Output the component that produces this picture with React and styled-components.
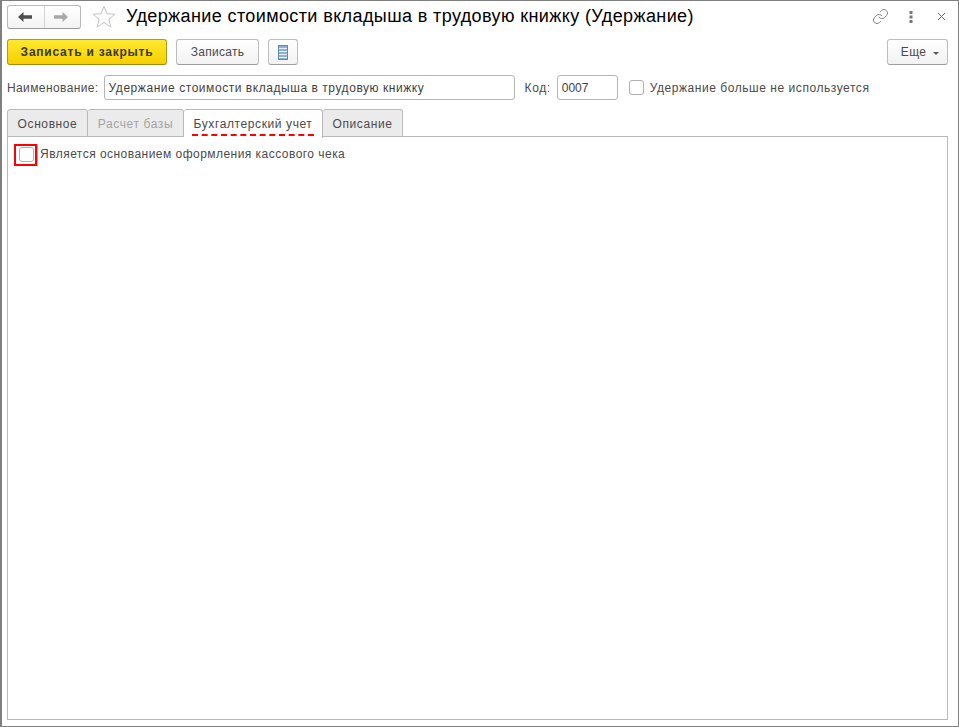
import React from "react";
import styled, { createGlobalStyle } from "styled-components";
import { Link } from "lucide-react";

const Global = createGlobalStyle`
  html, body { margin: 0; padding: 0; background: #fff; }
  body { font-family: "Liberation Sans", Arial, sans-serif; font-size: 12px; color: #4b4b4b; }
`;

const Window = styled.div`
  box-sizing: border-box;
  width: 959px;
  height: 727px;
  border: 1px solid #7f7f7f;
  border-left-width: 2px;
  padding: 4px 10px 6px 5px;
  display: flex;
  flex-direction: column;
`;

const TitleRow = styled.div`
  display: flex;
  align-items: center;
  height: 23px;
`;

const NavGroup = styled.div`
  box-sizing: border-box;
  display: flex;
  width: 74px;
  height: 24px;
  border: 1px solid #b8b8b8;
  border-bottom-color: #9a9a9a;
  border-radius: 3px;
  background: linear-gradient(#fff, #f3f3f3);
`;

const NavButton = styled.div`
  flex: 1;
  display: flex;
  align-items: center;
  justify-content: center;
  padding-right: 2px;
  & + & { border-left: 1px solid #d4d4d4; }
`;

const Star = styled.svg`
  margin-left: 11px;
  flex: none;
`;

const Title = styled.div`
  margin-left: 10px;
  font-size: 18px;
  letter-spacing: 0.39px;
  color: #000;
  white-space: nowrap;
  flex: 1;
`;

const WinIcons = styled.div`
  display: flex;
  align-items: center;
  margin-right: 2px;
`;

const LinkIcon = styled(Link)`
  color: #7d7d7d;
`;

const MenuDots = styled.svg`
  margin-left: 20px;
`;

const CloseIcon = styled.svg`
  margin-left: 24px;
`;

const Toolbar = styled.div`
  display: flex;
  align-items: stretch;
  gap: 9px;
  height: 26px;
  margin-top: 11px;
`;

const Button = styled.div`
  box-sizing: border-box;
  display: flex;
  align-items: center;
  justify-content: center;
  width: ${(p) => p.$w}px;
  border: 1px solid ${(p) => (p.$primary ? "#b19a1a" : "#bdbdbd")};
  border-bottom-color: ${(p) => (p.$primary ? "#a08a10" : "#9f9f9f")};
  border-radius: 3px;
  background: ${(p) => (p.$primary ? "linear-gradient(#ffe92e, #f6cf00)" : "linear-gradient(#fff, #f2f2f2)")};
  color: ${(p) => (p.$primary ? "#3c3a20" : "#4b4b4b")};
  font-weight: ${(p) => (p.$primary ? "bold" : "normal")};
  letter-spacing: ${(p) => (p.$primary ? 0.77 : 0.3)}px;
  margin-left: ${(p) => (p.$right ? "auto" : "0")};
  padding-left: ${(p) => (p.$right ? 5 : 0)}px;
  white-space: nowrap;
`;

const Caret = styled.span`
  width: 0;
  height: 0;
  margin-left: 7px;
  margin-top: 2px;
  border: 3px solid transparent;
  border-top: 3px solid #555;
  border-bottom: 0;
`;

const FieldRow = styled.div`
  display: flex;
  align-items: center;
  height: 25px;
  margin-top: 10px;
`;

const Label = styled.span`
  letter-spacing: ${(p) => p.$ls}px;
  white-space: nowrap;
  margin-left: ${(p) => p.$ml || 0}px;
  margin-bottom: ${(p) => p.$mb || 0}px;
`;

const Input = styled.div`
  box-sizing: border-box;
  width: ${(p) => p.$w}px;
  height: 25px;
  margin-left: ${(p) => p.$ml}px;
  padding: 0 3px 0 4px;
  display: flex;
  align-items: center;
  border: 1px solid #b5b5b5;
  border-radius: 3px;
  letter-spacing: ${(p) => p.$ls}px;
  color: #3f3f3f;
  white-space: nowrap;
`;

const Check = styled.div`
  box-sizing: border-box;
  flex: none;
  width: 15px;
  height: 15px;
  border: 1px solid #b0b0b0;
  border-radius: 3px;
  background: #fff;
  margin-left: ${(p) => p.$ml || 0}px;
`;

const Tabs = styled.div`
  display: flex;
  height: 28px;
  margin-top: 9px;
  margin-bottom: -1px;
  position: relative;
  z-index: 1;
`;

const Tab = styled.div`
  box-sizing: border-box;
  width: ${(p) => p.$w}px;
  height: ${(p) => (p.$active ? 29 : 28)}px;
  padding-top: 7px;
  text-align: center;
  border: 1px solid #b9b9b9;
  border-left-width: ${(p) => (p.$first ? 1 : 0)}px;
  border-bottom: ${(p) => (p.$active ? "0" : "1px solid #b9b9b9")};
  border-radius: 3px 3px 0 0;
  background: ${(p) => (p.$active ? "#fff" : "#ebebeb")};
  color: ${(p) => (p.$disabled ? "#a3a3a3" : "#4b4b4b")};
  letter-spacing: 0.6px;
  white-space: nowrap;
`;

const ActiveText = styled.span`
  display: inline-block;
  padding: 0 2px 3px;
  border-bottom: 2px dashed #f00;
  line-height: 14px;
`;

const Panel = styled.div`
  box-sizing: border-box;
  flex: 1;
  border: 1px solid #b9b9b9;
  padding: 7px 6px;
`;

const CheckRow = styled.div`
  display: flex;
  align-items: center;
  height: 22px;
`;

const Highlight = styled.div`
  box-sizing: border-box;
  width: 23px;
  height: 22px;
  border: 2px solid #f00;
  box-shadow: 1px 0 0 #f0b040;
  padding: 0 0 2px 3px;
  display: flex;
  align-items: center;
`;

export default function App() {
  return (
    <Window>
      <Global />
      <TitleRow>
        <NavGroup>
          <NavButton>
            <svg width="16" height="12" viewBox="0 0 16 12">
              <path d="M1 6 L6.5 1 V4.2 H15 V7.8 H6.5 V11 Z" fill="#4f4f4f" />
            </svg>
          </NavButton>
          <NavButton>
            <svg width="16" height="12" viewBox="0 0 16 12">
              <path d="M15 6 L9.5 1 V4.2 H1 V7.8 H9.5 V11 Z" fill="#a8a8a8" />
            </svg>
          </NavButton>
        </NavGroup>
        <Star width="24" height="23" viewBox="0 0 24 23">
          <path d="M12 1.2 L15 8.8 L23 9.2 L16.8 14.2 L18.9 22 L12 17.6 L5.1 22 L7.2 14.2 L1 9.2 L9 8.8 Z" fill="#fff" stroke="#c4c4c4" strokeWidth="1" />
        </Star>
        <Title>Удержание стоимости вкладыша в трудовую книжку (Удержание)</Title>
        <WinIcons>
          <LinkIcon size={17} strokeWidth={1.3} />
          <MenuDots width="4" height="12" viewBox="0 0 4 12" fill="#777">
            <rect x="0.5" y="0" width="3" height="3" />
            <rect x="0.5" y="4.5" width="3" height="3" />
            <rect x="0.5" y="9" width="3" height="3" />
          </MenuDots>
          <CloseIcon width="9" height="9" viewBox="0 0 9 9" stroke="#666" strokeWidth="1">
            <path d="M1 1 L8 8 M8 1 L1 8" />
          </CloseIcon>
        </WinIcons>
      </TitleRow>
      <Toolbar>
        <Button $primary $w={160}>Записать и закрыть</Button>
        <Button $w={83}>Записать</Button>
        <Button $w={30}>
          <svg width="10" height="15" viewBox="0 0 10 15">
            <rect x="0.5" y="0.5" width="9" height="14" fill="#8fb2cf" stroke="#5f8bad" />
            <path d="M1 3.5 H9 M1 6.5 H9 M1 9.5 H9 M1 12.5 H9" stroke="#e6eef5" />
          </svg>
        </Button>
        <Button $right $w={61}>Еще<Caret /></Button>
      </Toolbar>
      <FieldRow>
        <Label $ls={0.39}>Наименование:</Label>
        <Input $w={411} $ml={5} $ls={0.55}>Удержание стоимости вкладыша в трудовую книжку</Input>
        <Label $ml={10} $ls={0.6}>Код:</Label>
        <Input $w={61} $ml={6} $ls={0}>0007</Input>
        <Check $ml={11} />
        <Label $ml={6} $ls={0.55}>Удержание больше не используется</Label>
      </FieldRow>
      <Tabs>
        <Tab $first $w={81}>Основное</Tab>
        <Tab $disabled $w={96}>Расчет базы</Tab>
        <Tab $active $w={139}><ActiveText>Бухгалтерский учет</ActiveText></Tab>
        <Tab $w={80}>Описание</Tab>
      </Tabs>
      <Panel>
        <CheckRow>
          <Highlight><Check /></Highlight>
          <Label $ml={3} $mb={2} $ls={0.465}>Является основанием оформления кассового чека</Label>
        </CheckRow>
      </Panel>
    </Window>
  );
}
